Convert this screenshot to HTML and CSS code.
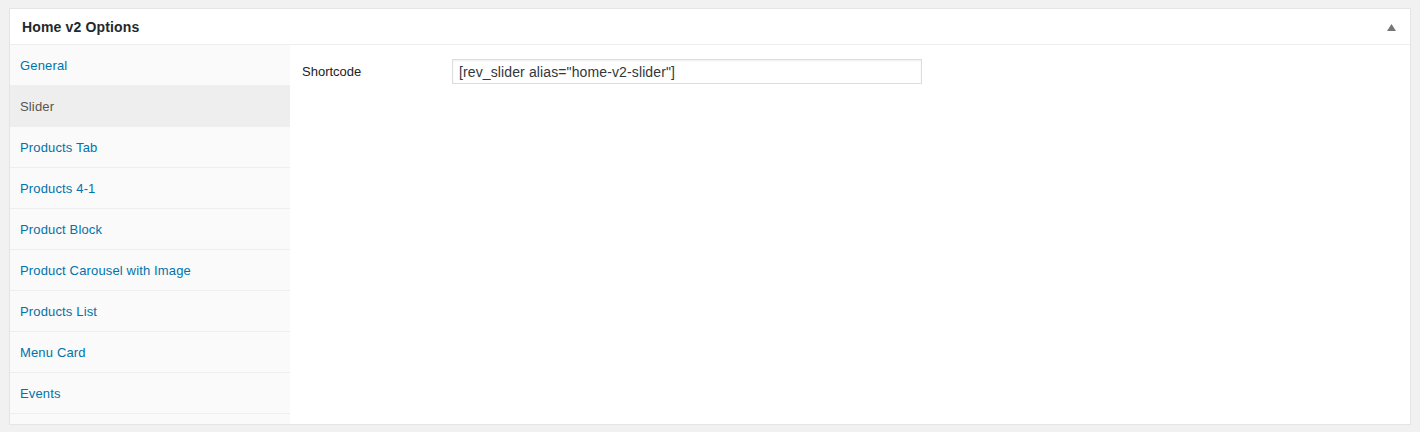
FILE: index.html
```html
<!DOCTYPE html>
<html>
<head>
<meta charset="utf-8">
<link rel="stylesheet" href="styles.css">
</head>
<body>
<div class="postbox">
  <div class="postbox-header">
    <h2 class="postbox-title">Home v2 Options</h2>
    <span class="toggle"><svg width="9" height="7" viewBox="0 0 9 7"><polygon points="4.5,0 9,7 0,7" fill="#72777c"/></svg></span>
  </div>
  <div class="postbox-body">
    <ul class="tabs">
      <li class="tab"><a>General</a></li>
      <li class="tab active"><a>Slider</a></li>
      <li class="tab"><a>Products Tab</a></li>
      <li class="tab"><a>Products 4-1</a></li>
      <li class="tab"><a>Product Block</a></li>
      <li class="tab"><a>Product Carousel with Image</a></li>
      <li class="tab"><a>Products List</a></li>
      <li class="tab"><a>Menu Card</a></li>
      <li class="tab"><a>Events</a></li>
    </ul>
    <div class="panel">
      <div class="field-row">
        <label class="field-label">Shortcode</label>
        <div class="field-input">[rev_slider alias="home-v2-slider"]</div>
      </div>
    </div>
  </div>
</div>
</body>
</html>
```

FILE: styles.css
```css
html, body {
  margin: 0;
  padding: 0;
  background: #f1f1f1;
  font-family: "Liberation Sans", Arial, Helvetica, sans-serif;
}
.postbox {
  margin: 8px 9px 0 9px;
  background: #fff;
  border: 1px solid #e5e5e5;
  box-shadow: 0 1px 1px rgba(0,0,0,0.04);
}
.postbox-header {
  height: 35px;
  border-bottom: 1px solid #eee;
  display: flex;
  align-items: center;
  justify-content: space-between;
  padding: 0 14px 0 12px;
}
.postbox-title {
  margin: 0;
  font-size: 14px;
  font-weight: 700;
  color: #23282d;
  line-height: 1;
  letter-spacing: 0.15px;
}
.toggle {
  display: flex;
  align-items: center;
  margin-top: 1px;
}
.postbox-body {
  display: flex;
  min-height: 379px;
}
.tabs {
  list-style: none;
  margin: 0;
  padding: 0 0 10px 0;
  width: 280px;
  background: #fafafa;
  flex: none;
}
.tab {
  height: 40px;
  border-bottom: 1px solid #eee;
  display: flex;
  align-items: center;
  padding-left: 10px;
  font-size: 13px;
  letter-spacing: 0.15px;
  color: #0073aa;
}
.tab.active {
  background: #eee;
  color: #555;
}
.panel {
  flex: 1;
  padding: 14px 12px;
}
.field-row {
  display: flex;
  align-items: center;
}
.field-label {
  width: 150px;
  font-size: 13px;
  color: #222;
  margin-top: -1px;
}
.field-input {
  box-sizing: border-box;
  width: 470px;
  height: 25px;
  border: 1px solid #ddd;
  box-shadow: inset 0 1px 2px rgba(0,0,0,0.07);
  padding: 0 6px;
  font-size: 14px;
  letter-spacing: 0.12px;
  color: #32373c;
  display: flex;
  align-items: center;
  white-space: nowrap;
}
```
